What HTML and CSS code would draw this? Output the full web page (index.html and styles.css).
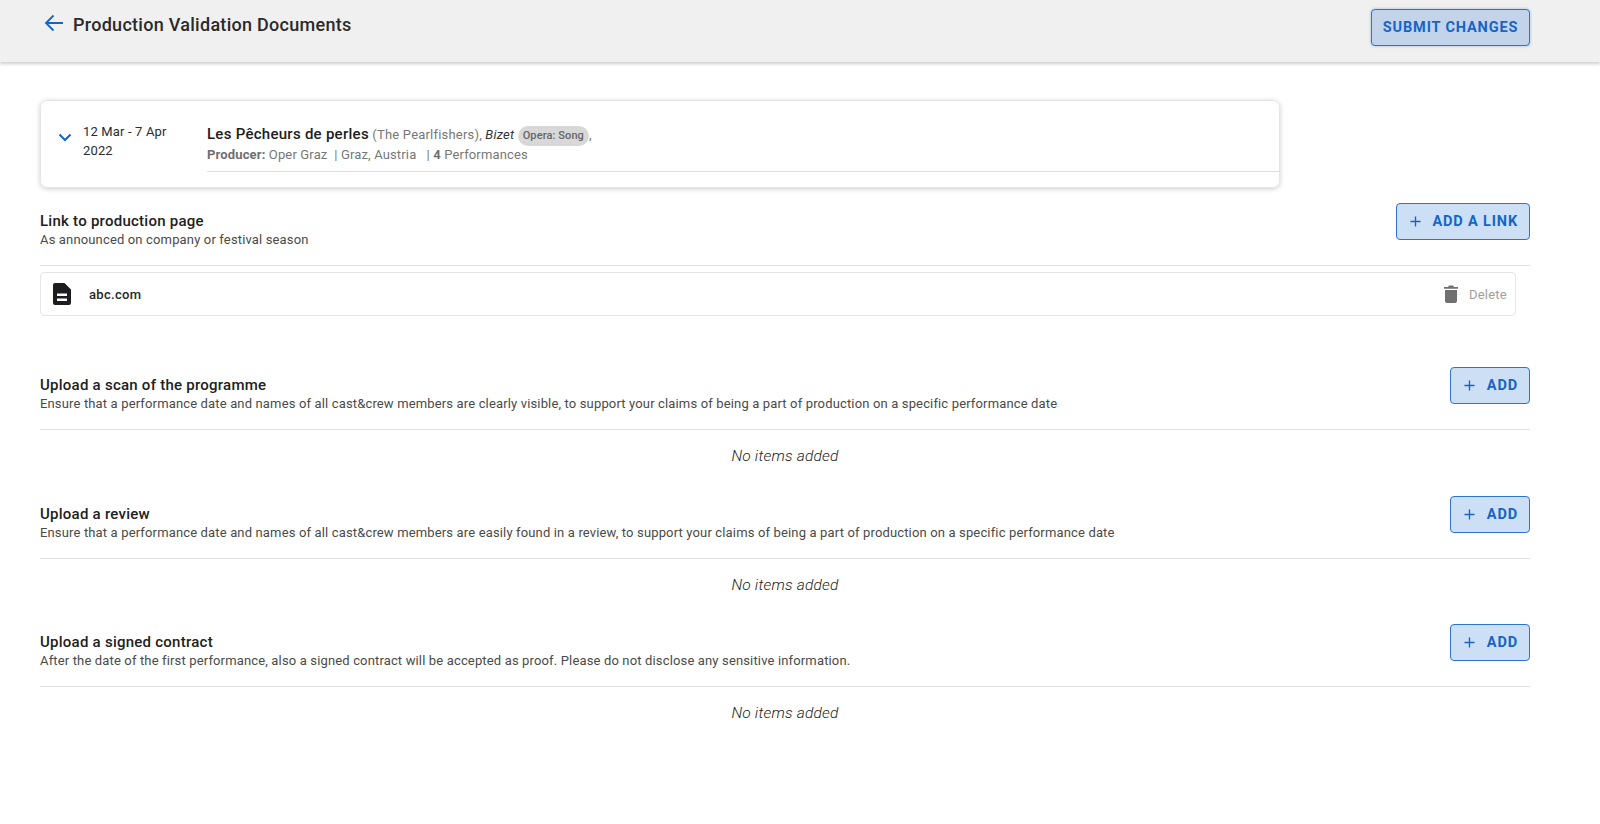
FILE: index.html
```html
<!DOCTYPE html>
<html lang="en">
<head>
<meta charset="utf-8">
<title>Production Validation Documents</title>
<link rel="stylesheet" href="styles.css">
</head>
<body>
<header class="topbar">
  <div class="topbar-left">
    <svg class="back" viewBox="0 0 20 18" width="20" height="18"><path d="M19 9H2M9.500 1.500 2 9l7.500 7.500" fill="none" stroke="#1565c8" stroke-width="1.800"/></svg>
    <h1 class="page-title">Production Validation Documents</h1>
  </div>
  <button class="btn btn-submit">SUBMIT CHANGES</button>
</header>
<main class="content">
  <section class="card">
    <svg class="chevron" viewBox="0 0 14 9" width="14" height="9"><path d="M1.500 1.500 7 7l5.500-5.500" fill="none" stroke="#1565c8" stroke-width="2"/></svg>
    <div class="dates">12 Mar - 7 Apr<br>2022</div>
    <div class="prod">
      <div class="prod-line1"><strong class="prod-name">Les Pêcheurs de perles</strong> <span class="muted">(The Pearlfishers),</span> <em class="composer">Bizet</em> <span class="chip">Opera: Song</span><span class="muted">,</span></div>
      <div class="prod-line2"><b>Producer:</b> Oper Graz &nbsp;| Graz, Austria &nbsp; | <b>4</b> Performances</div>
    </div>
  </section>

  <section class="block block-link">
    <div class="block-head">
      <div>
        <h2 class="block-title">Link to production page</h2>
        <p class="block-sub">As announced on company or festival season</p>
      </div>
      <button class="btn btn-add"><span class="plus"><svg viewBox="0 0 12 12" width="11" height="11"><path d="M6 .5v11M.5 6h11" stroke="#1565c8" stroke-width="1.500"/></svg></span>ADD A LINK</button>
    </div>
    <div class="item">
      <svg class="doc" viewBox="0 0 18 22" width="18" height="22"><path fill-rule="evenodd" d="M2 0h9.500L18 6.500V20a2 2 0 0 1-2 2H2a2 2 0 0 1-2-2V2a2 2 0 0 1 2-2ZM4 10.500V13h10v-2.500ZM4 15.500V18h10v-2.500Z" fill="#1d1d1f"/></svg>
      <span class="item-name">abc.com</span>
      <svg class="trash" viewBox="0 0 14 18" width="14" height="18"><path d="M1 5h12v11a2 2 0 0 1-2 2H3a2 2 0 0 1-2-2ZM0 2h4l1-1.500h4L10 2h4v1.800H0Z" fill="#707070"/></svg>
      <span class="delete">Delete</span>
    </div>
  </section>

  <section class="block block-scan">
    <div class="block-head">
      <div>
        <h2 class="block-title">Upload a scan of the programme</h2>
        <p class="block-sub">Ensure that a performance date and names of all cast&amp;crew members are clearly visible, to support your claims of being a part of production on a specific performance date</p>
      </div>
      <button class="btn btn-add"><span class="plus"><svg viewBox="0 0 12 12" width="11" height="11"><path d="M6 .5v11M.5 6h11" stroke="#1565c8" stroke-width="1.500"/></svg></span>ADD</button>
    </div>
    <p class="empty">No items added</p>
  </section>

  <section class="block">
    <div class="block-head">
      <div>
        <h2 class="block-title">Upload a review</h2>
        <p class="block-sub">Ensure that a performance date and names of all cast&amp;crew members are easily found in a review, to support your claims of being a part of production on a specific performance date</p>
      </div>
      <button class="btn btn-add"><span class="plus"><svg viewBox="0 0 12 12" width="11" height="11"><path d="M6 .5v11M.5 6h11" stroke="#1565c8" stroke-width="1.500"/></svg></span>ADD</button>
    </div>
    <p class="empty">No items added</p>
  </section>

  <section class="block">
    <div class="block-head">
      <div>
        <h2 class="block-title">Upload a signed contract</h2>
        <p class="block-sub">After the date of the first performance, also a signed contract will be accepted as proof. Please do not disclose any sensitive information.</p>
      </div>
      <button class="btn btn-add"><span class="plus"><svg viewBox="0 0 12 12" width="11" height="11"><path d="M6 .5v11M.5 6h11" stroke="#1565c8" stroke-width="1.500"/></svg></span>ADD</button>
    </div>
    <p class="empty">No items added</p>
  </section>
</main>
</body>
</html>
```
FILE: styles.css
```css
* { box-sizing: border-box; }
html, body { margin: 0; height: 100%; }
body {
  background: #fff;
  color: #212121;
  font-family: Roboto, "Liberation Sans", sans-serif;
  overflow: hidden;
}
.topbar {
  height: 62px;
  margin-bottom: 1px;
  background: #f0f0f0;
  box-shadow: 0 2px 3px rgba(0, 0, 0, .2);
  display: flex;
  justify-content: space-between;
  align-items: flex-start;
  padding: 9px 70px 0 44px;
}
.topbar-left { display: flex; align-items: center; height: 30px; }
.back { margin-right: 9px; margin-top: -2px; }
.page-title { margin: 0; font-size: 18px; font-weight: 500; color: #2a2a2a; letter-spacing: .28px; }
.btn {
  font-family: inherit;
  font-weight: 700;
  color: #1565c8;
  border: 1px solid #2f74cc;
  border-radius: 4px;
  height: 37px;
  padding: 0;
  display: flex;
  align-items: center;
  letter-spacing: .85px;
  font-size: 14.500px;
  flex-shrink: 0;
}
.btn-submit { width: 159px; justify-content: center; background: #c3d4ea; box-shadow: 0 0 3px rgba(21, 101, 200, .4); }
.btn-add { background: #cddff5; padding: 0 11px 0 13px; }
.plus { display: flex; margin-right: 11.500px; }
.content { padding: 37px 70px 0 40px; }
.card {
  width: 1240px;
  height: 88px;
  border: 1px solid #e4e4e4;
  border-radius: 7px;
  box-shadow: 0 1px 5px rgba(0, 0, 0, .2);
  display: flex;
  padding: 22px 0 0 17px;
}
.chevron { margin-top: 10px; margin-right: 11px; flex-shrink: 0; }
.dates { width: 124px; font-size: 13px; line-height: 18.500px; color: #2c2c2c; letter-spacing: .15px; }
.prod { flex: 1; height: 49px; border-bottom: 1px solid #dedede; }
.prod-line1 { font-size: 13px; line-height: 22px; color: #777; white-space: nowrap; letter-spacing: .2px; }
.prod-name { font-size: 15px; font-weight: 500; color: #202020; letter-spacing: .27px; }
.composer { color: #333; }
.chip {
  display: inline-block;
  background: #d8d8d8;
  border-radius: 10px;
  font-size: 11px;
  font-weight: 500;
  color: #666;
  padding: 0 5px;
  height: 20px;
  line-height: 20px;
  letter-spacing: .1px;
  vertical-align: baseline;
}
.prod-line2 { font-size: 13px; line-height: 18px; color: #777; letter-spacing: .15px; white-space: pre; }
.prod-line2 b { font-weight: 700; color: #707070; }
.block { margin-top: 13.500px; }
.block-link { margin-top: 15px; }
.block-scan { margin-top: 51px; }
.block-head {
  display: flex;
  justify-content: space-between;
  border-bottom: 1px solid #e2e2e2;
  height: 63px;
}
.block-title { margin: 9px 0 0; font-size: 15px; line-height: 18px; font-weight: 500; color: #212121; letter-spacing: .25px; }
.block-sub { margin: 2px 0 0; font-size: 13px; line-height: 16px; color: #4a4a4a; letter-spacing: .15px; }
.item {
  margin-top: 6px;
  width: 1476px;
  height: 44px;
  border: 1px solid #e6e6e6;
  border-radius: 4px;
  display: flex;
  align-items: center;
  padding: 0 8px 0 12px;
}
.item-name { flex: 1; margin-left: 18px; font-size: 13px; font-weight: 500; color: #262626; letter-spacing: .3px; }
.trash { margin-right: 11px; }
.delete { font-size: 13px; color: #a0a0a0; letter-spacing: .24px; }
.empty { margin: 0; font-size: 15.500px; font-style: italic; font-weight: 300; text-align: center; color: #222; line-height: 52px; height: 52px; letter-spacing: .2px; }
```
